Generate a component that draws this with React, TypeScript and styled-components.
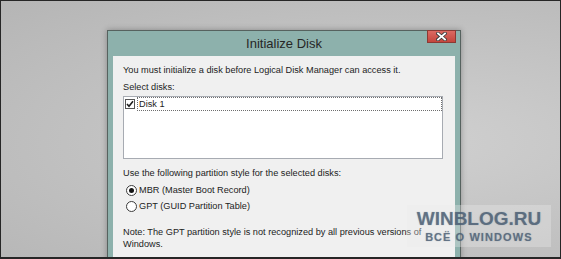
import styled, { createGlobalStyle } from 'styled-components'

const GlobalStyle = createGlobalStyle`
    html, body {
        margin: 0;
        padding: 0;
        background: #c4c4c4;
    }
    * {
        box-sizing: border-box;
    }
`

export default function App(){
    return (
        <>
            <GlobalStyle />
            <Screen>
                <Dialog>
                    <TitleBar>
                        <Title>Initialize Disk</Title>
                        <CloseButton>
                            <svg width="11" height="9" viewBox="0 0 11 9">
                                <path d="M2 1.5 L9 7.5 M9 1.5 L2 7.5" stroke="#3d3d3d" strokeWidth="3.6" strokeLinecap="square" />
                                <path d="M2 1.5 L9 7.5 M9 1.5 L2 7.5" stroke="#ffffff" strokeWidth="1.8" strokeLinecap="square" />
                            </svg>
                        </CloseButton>
                    </TitleBar>
                    <Body>
                        <Line>You must initialize a disk before Logical Disk Manager can access it.</Line>
                        <Line $top={5}>Select disks:</Line>
                        <ListBox>
                            <ListRow>
                                <CheckBox>
                                    <svg width="8" height="8" viewBox="0 0 8 8">
                                        <path d="M1 4 L3 6.2 L7 1.2" stroke="#1e1e1e" strokeWidth="1.6" fill="none" />
                                    </svg>
                                </CheckBox>
                                <RowLabel>Disk 1</RowLabel>
                            </ListRow>
                        </ListBox>
                        <Line $top={8}>Use the following partition style for the selected disks:</Line>
                        <RadioRow $top={3}>
                            <Radio $checked />
                            <span>MBR (Master Boot Record)</span>
                        </RadioRow>
                        <RadioRow>
                            <Radio />
                            <span>GPT (GUID Partition Table)</span>
                        </RadioRow>
                        <Line $top={12}>Note: The GPT partition style is not recognized by all previous versions of<br />Windows.</Line>
                    </Body>
                </Dialog>
                <Watermark>
                    <WatermarkTitle>WINBLOG.RU</WatermarkTitle>
                    <WatermarkSub>ВСЁ О WINDOWS</WatermarkSub>
                </Watermark>
            </Screen>
        </>
    )
}

const Screen = styled.div`
    position: relative;
    width: 561px;
    height: 259px;
    overflow: hidden;
    border: 1px solid #262626;
    border-bottom-width: 2px;
    padding: 29px 0 0 106px;
    background: radial-gradient(ellipse at 72% 55%, #d0d0d0 0%, #c4c4c4 45%, #b5b5b5 100%);
`

const Dialog = styled.div`
    width: 354px;
    height: 250px;
    display: flex;
    flex-direction: column;
    border: 1px solid #56625f;
    background: #8db1ac;
    box-shadow: 0 0 6px rgba(0, 0, 0, 0.3);
`

const TitleBar = styled.div`
    position: relative;
    height: 25px;
    display: flex;
    align-items: center;
    justify-content: center;
`

const Title = styled.div`
    font-family: "Liberation Sans", Arial, sans-serif;
    font-size: 13px;
    color: #262626;
`

const CloseButton = styled.div`
    position: absolute;
    top: -1px;
    right: 4px;
    width: 29px;
    height: 13px;
    display: flex;
    align-items: center;
    justify-content: center;
    border: 1px solid #8b3a34;
    background: linear-gradient(#dc6a62, #c4463d);
`

const Body = styled.div`
    flex: 1;
    margin: 0 5px;
    padding: 8px 0 0 10px;
    background: #f0f0f0;
    font-family: "Liberation Sans", Arial, sans-serif;
    font-size: 9.2px;
    line-height: 12px;
    color: #1c1c1c;
`

const Line = styled.div<{ $top?: number }>`
    margin-top: ${p => p.$top || 0}px;
    white-space: nowrap;
`

const ListBox = styled.div`
    margin-top: 3px;
    width: 320px;
    height: 63px;
    background: #ffffff;
    border: 1px solid #a7abb2;
`

const ListRow = styled.div`
    height: 14px;
    display: flex;
    align-items: center;
`

const CheckBox = styled.div`
    width: 10px;
    height: 10px;
    margin-left: 1px;
    border: 1px solid #555555;
    background: #ffffff;
    display: flex;
    align-items: center;
    justify-content: center;
`

const RowLabel = styled.div`
    flex: 1;
    height: 14px;
    margin-left: 2px;
    padding-left: 1px;
    border: 1px dotted #6e6e6e;
    line-height: 12px;
`

const RadioRow = styled.div<{ $top?: number }>`
    height: 16px;
    margin-top: ${p => p.$top || 0}px;
    padding-left: 3px;
    display: flex;
    align-items: center;
    gap: 2px;
`

const Radio = styled.div<{ $checked?: boolean }>`
    width: 11px;
    height: 11px;
    border-radius: 50%;
    border: 1px solid #3c3c3c;
    background: #ffffff;
    display: flex;
    align-items: center;
    justify-content: center;

    &::after {
        content: "";
        width: 5px;
        height: 5px;
        border-radius: 50%;
        background: ${p => p.$checked ? '#141414' : 'transparent'};
    }
`

const Watermark = styled.div`
    position: absolute;
    left: 406px;
    top: 204px;
    width: 144px;
    height: 42px;
    display: flex;
    flex-direction: column;
    align-items: center;
    justify-content: center;
    background: rgba(236, 236, 236, 0.35);
    font-family: "Liberation Sans", Arial, sans-serif;
    font-weight: 700;
    color: rgba(72, 92, 114, 0.72);
    text-shadow: 0 0 1px rgba(72, 92, 114, 0.5);
`

const WatermarkTitle = styled.div`
    font-size: 19px;
    line-height: 18px;
`

const WatermarkSub = styled.div`
    font-size: 11px;
    line-height: 12px;
    letter-spacing: 1.1px;
    margin-top: 3px;
`
